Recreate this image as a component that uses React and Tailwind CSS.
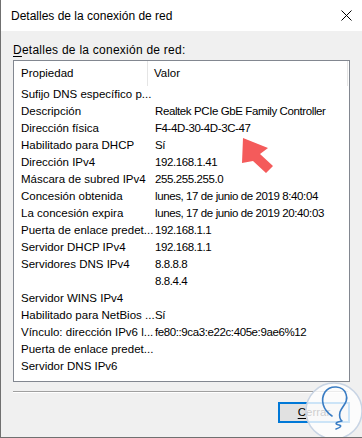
import React from "react";

const rows = [
  ["Sufijo DNS específico p...", ""],
  ["Descripción", "Realtek PCIe GbE Family Controller"],
  ["Dirección física", "F4-4D-30-4D-3C-47"],
  ["Habilitado para DHCP", "Sí"],
  ["Dirección IPv4", "192.168.1.41"],
  ["Máscara de subred IPv4", "255.255.255.0"],
  ["Concesión obtenida", "lunes, 17 de junio de 2019 8:40:04"],
  ["La concesión expira", "lunes, 17 de junio de 2019 20:40:03"],
  ["Puerta de enlace predet...", "192.168.1.1"],
  ["Servidor DHCP IPv4", "192.168.1.1"],
  ["Servidores DNS IPv4", "8.8.8.8"],
  ["", "8.8.4.4"],
  ["Servidor WINS IPv4", ""],
  ["Habilitado para NetBios ...", "Sí"],
  ["Vínculo: dirección IPv6 l...", "fe80::9ca3:e22c:405e:9ae6%12"],
  ["Puerta de enlace predet...", ""],
  ["Servidor DNS IPv6", ""],
];

export default function App() {
  return (
    <div
      className="relative w-[362px] h-[438px] flex flex-col border-l border-b border-[#707070] bg-[#f0f0f0] text-[11.5px] text-black overflow-hidden"
      style={{ fontFamily: '"Segoe UI", "Liberation Sans", sans-serif' }}
    >
      {/* title bar */}
      <div className="h-[31px] bg-white flex items-center justify-between pl-[10px] pr-[10px] shrink-0">
        <span className="text-[12px] leading-none">Detalles de la conexión de red</span>
        <svg width="11" height="11" viewBox="0 0 11 11">
          <path d="M0.5 0.5 L10.5 10.5 M10.5 0.5 L0.5 10.5" stroke="#000" strokeWidth="1" />
        </svg>
      </div>

      {/* body */}
      <div className="flex-1 flex flex-col px-[12px]">
        <div className="h-[29px] flex items-center pt-[8px] leading-none">
          <span className="text-[12px] tracking-[0.25px]">
            <span className="underline underline-offset-2">D</span>etalles de la conexión de red:
          </span>
        </div>

        <div className="h-[322px] border border-[#828790] bg-white flex flex-col">
          {/* header */}
          <div className="h-[25px] flex items-stretch shrink-0">
            <div className="w-[134px] border-r border-[#e5e5e5] flex items-center pl-[7px]">Propiedad</div>
            <div className="flex-1 border-r border-[#e5e5e5] mr-[1px] flex items-center pl-[6px]">Valor</div>
          </div>
          <div className="flex flex-col">
            {rows.map(([k, v], i) => (
              <div key={i} className="h-[17px] flex items-center whitespace-nowrap">
                <div className="w-[134px] shrink-0 pl-[7px]">{k}</div>
                <div className="flex-1 pl-[7px] tracking-[-0.4px]">{v}</div>
              </div>
            ))}
          </div>
        </div>

        <div className="mt-[9px] mr-[2px] h-[2px] border-t border-[#a0a0a0] border-b border-b-white" />

        <div className="flex justify-end mt-[9px]">
          <button className="w-[72px] h-[21px] border-2 border-[#0078d7] bg-[#e1e1e1] flex items-center justify-center leading-none text-[11.5px]">
            <span>
              <span className="underline underline-offset-2">C</span>errar
            </span>
          </button>
        </div>
      </div>

      {/* red arrow */}
      <svg className="absolute left-[236px] top-[132px]" width="40" height="46" viewBox="236 132 40 46">
        <polygon
          points="242,138 267,148 259,154 272,166 265,173 252,161 241,163"
          fill="#f45b5b"
        />
      </svg>

      {/* watermark */}
      <svg className="absolute left-[303px] top-[380px]" width="60" height="62" viewBox="303 380 60 62">
        <circle cx="333" cy="411" r="28" fill="white" fillOpacity="0.8" stroke="#c8d4e4" strokeWidth="1.5" />
        <path
          d="M331 416 C322 410 319 400 324 392 C329 385 342 385 345 394 C348 402 341 406 339 412 C338 416 339 420 341 421 C335 422 333 424 338 425 C342 426 338 428 335 429"
          fill="none"
          stroke="#3a7dc4"
          strokeWidth="1.6"
          strokeLinecap="round"
          strokeLinejoin="round"
        />
      </svg>
    </div>
  );
}
